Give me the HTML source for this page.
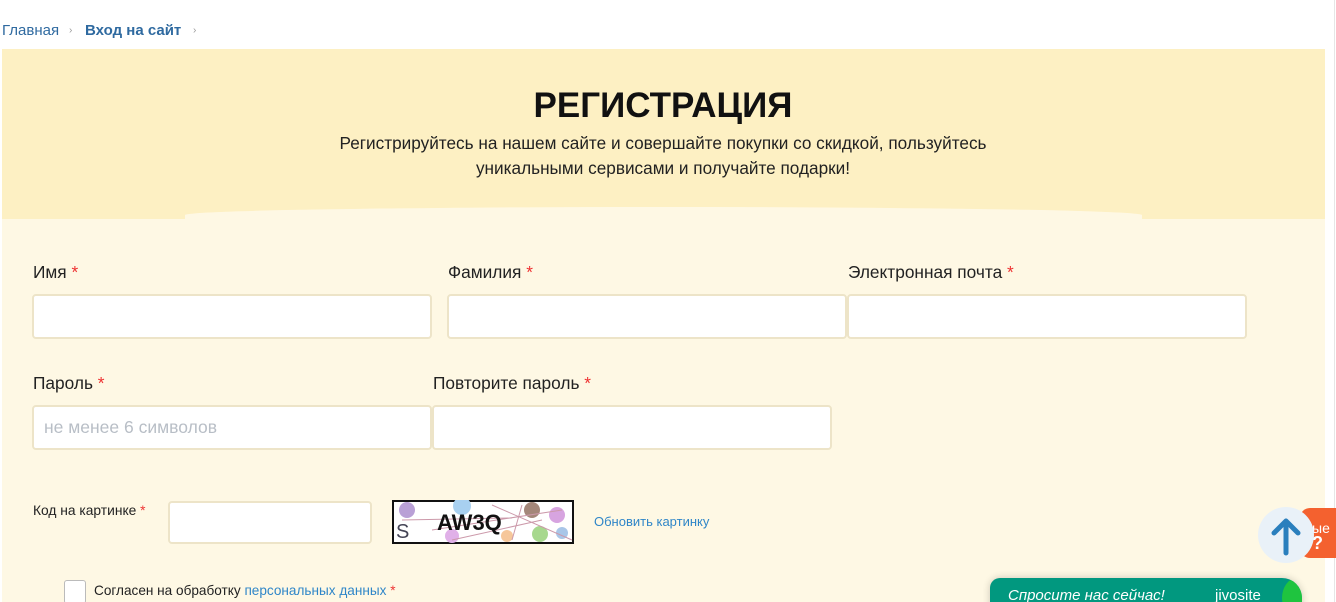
<!DOCTYPE html>
<html><head><meta charset="utf-8"><style>
*{box-sizing:border-box;margin:0;padding:0}
html,body{width:1336px;height:602px;overflow:hidden}
body{background:#fff;font-family:"Liberation Sans","Noto Sans CJK SC",sans-serif;position:relative;color:#222}
.a{position:absolute}
.bc{top:22px;font-size:15px;color:#2f6aa0}
.panel{left:2px;top:49px;width:1323px;height:553px;background:#fef8e4}
.top{left:2px;top:49px;width:1323px;height:170px;background:#fdf0c3}
.arc{left:185px;top:207px;width:957px;height:14px;background:#fef8e4;border-radius:50% 50% 0 0/8px 8px 0 0}
h1{position:absolute;left:0;width:1326px;top:86px;text-align:center;font-size:35px;font-weight:bold;color:#111}
.sub{left:0;width:1326px;top:131px;text-align:center;font-size:17.2px;line-height:25px;color:#222}
.lbl{font-size:17.3px;color:#222}
.lbl b{color:#e33;font-weight:normal}
.in{background:#fff;border:2px solid #ede4c8;border-radius:4px;height:45px}
.ph{font-size:17.5px;color:#b8bec6;padding:10px 10px}
</style></head><body>
<div class="a bc" style="left:2px">Главная</div>
<div class="a bc" style="left:69px;color:#999;font-size:10px;top:25px">›</div>
<div class="a bc" style="left:85px;font-weight:bold">Вход на сайт</div>
<div class="a bc" style="left:193px;color:#999;font-size:10px;top:25px">›</div>
<div class="a" style="left:1334px;top:0;width:1px;height:602px;background:#e6e6e6"></div>
<div class="a panel"></div>
<div class="a top"></div>
<div class="a arc"></div>
<h1>РЕГИСТРАЦИЯ</h1>
<div class="a sub">Регистрируйтесь на нашем сайте и совершайте покупки со скидкой, пользуйтесь<br>уникальными сервисами и получайте подарки!</div>

<div class="a lbl" style="left:33px;top:262px">Имя <b>*</b></div>
<div class="a lbl" style="left:448px;top:262px">Фамилия <b>*</b></div>
<div class="a lbl" style="left:848px;top:262px">Электронная почта <b>*</b></div>
<div class="a in" style="left:32px;top:294px;width:400px"></div>
<div class="a in" style="left:447px;top:294px;width:400px"></div>
<div class="a in" style="left:847px;top:294px;width:400px"></div>

<div class="a lbl" style="left:33px;top:373px">Пароль <b>*</b></div>
<div class="a lbl" style="left:433px;top:373px">Повторите пароль <b>*</b></div>
<div class="a in ph" style="left:32px;top:405px;width:400px">не менее 6 символов</div>
<div class="a in" style="left:432px;top:405px;width:400px"></div>

<div class="a lbl" style="left:33px;top:503px;font-size:13.8px">Код на картинке <b>*</b></div>
<div class="a in" style="left:168px;top:501px;width:204px;height:43px"></div>
<svg class="a" style="left:392px;top:500px" width="182" height="44" viewBox="0 0 182 44">
<rect x="1" y="1" width="180" height="42" fill="#fff" stroke="#111" stroke-width="2"/>
<circle cx="15" cy="10" r="8" fill="#b9a0d6"/><circle cx="70" cy="6" r="9" fill="#a8d0f0"/><circle cx="140" cy="10" r="8" fill="#a4877a"/><circle cx="165" cy="15" r="8" fill="#d7a4e0"/><circle cx="148" cy="34" r="8" fill="#a7d88e"/><circle cx="115" cy="36" r="6" fill="#f6c79a"/><circle cx="60" cy="36" r="7" fill="#e0b0e8"/><circle cx="170" cy="33" r="6" fill="#a9c6e8"/>
<path d="M10 20L120 18M40 30L170 10M100 5L180 40M60 40L150 20M130 5L120 40" stroke="#c9a" stroke-width="1" fill="none"/>
<text x="4" y="38" font-size="20" fill="#445" font-family="Liberation Sans">S</text>
<text x="45" y="30" font-size="22" fill="#111" font-family="Liberation Sans" font-weight="bold">AW3Q</text>
</svg>
<div class="a" style="left:594px;top:514px;font-size:13px;color:#2f86c8">Обновить картинку</div>

<div class="a" style="left:64px;top:580px;width:22px;height:24px;background:#fff;border:1px solid #bbb;border-radius:3px"></div>
<div class="a" style="left:94px;top:583px;font-size:13.6px;color:#222">Согласен на обработку <span style="color:#2f86c8">персональных данных</span> <span style="color:#e33">*</span></div>

<div class="a" style="left:1300px;top:508px;width:36px;height:50px;background:#f4612f;border-radius:10px 0 0 10px"></div>
<div class="a" style="left:1312px;top:520px;color:#fff;font-size:14px">ые</div>
<div class="a" style="left:1312px;top:533px;color:#fff;font-size:18px;font-weight:bold">?</div>
<div class="a" style="left:1258px;top:507px;width:56px;height:56px;border-radius:50%;background:#e9f1f8"></div>
<svg class="a" style="left:1264px;top:513px" width="44" height="44" viewBox="0 0 44 44"><path d="M22 40V8M10 20L22 8L34 20" stroke="#2a7fbd" stroke-width="5" fill="none" stroke-linecap="round" stroke-linejoin="round"/></svg>

<div class="a" style="left:990px;top:578px;width:312px;height:40px;background:#01987f;border-radius:10px 20px 0 0;overflow:hidden;box-shadow:0 0 8px rgba(0,0,0,.2)">
<div style="position:absolute;right:-10px;top:0;width:30px;height:40px;background:#1fc43f;border-radius:50%"></div>
<div style="position:absolute;left:18px;top:9px;color:#fff;font-style:italic;font-size:15px">Спросите нас сейчас!</div>
<div style="position:absolute;left:225px;top:9px;color:#fff;font-size:15px">jivosite</div>
</div>
</body></html>
